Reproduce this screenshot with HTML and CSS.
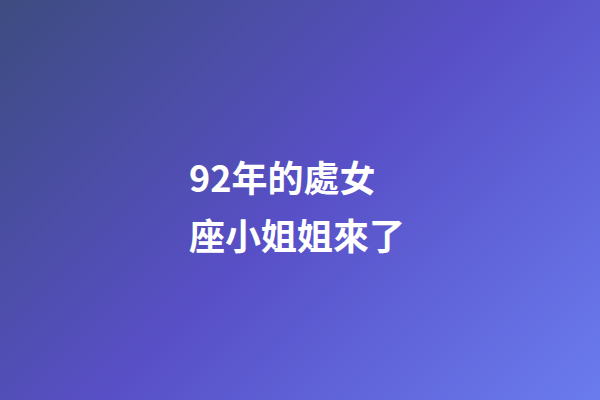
FILE: index.html
```html
<!DOCTYPE html>
<html lang="zh-Hant">
<head>
  <meta charset="UTF-8" />
  <title>92年的處女座小姐姐來了</title>
  <link rel="stylesheet" href="styles.css">
</head>
<body>
  <div class="cover">
    <h1 class="cover-title">92年的處女座小姐姐來了</h1>
  </div>
</body>
</html>
```

FILE: styles.css
```css
* {
  margin: 0;
  padding: 0;
  box-sizing: border-box;
}

html, body {
  width: 100%;
  height: 100%;
  overflow: hidden;
}

.cover {
  width: 600px;
  height: 400px;
  display: flex;
  justify-content: center;
  align-items: center;
  background: linear-gradient(135deg, #3d4c80 0%, #584fc6 50%, #6a7cee 100%);
}

.cover-title {
  width: 222px;
  color: #ffffff;
  font-family: "Noto Sans CJK TC", "Noto Sans", sans-serif;
  font-size: 36px;
  font-weight: 700;
  line-height: 58px;
  margin-top: 10px;
  letter-spacing: 0;
}
```
